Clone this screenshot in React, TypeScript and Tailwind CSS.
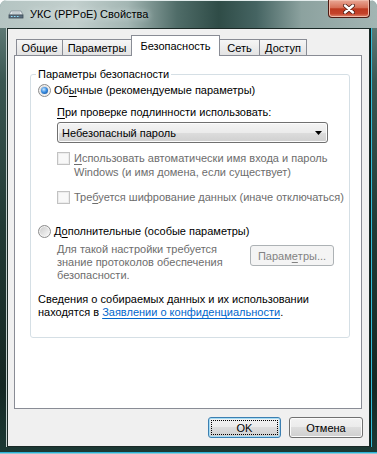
import React from "react";

const Radio = ({ checked }: { checked?: boolean }) => (
  <span className="flex h-[13px] w-[13px] shrink-0 items-center justify-center rounded-full border border-[#8c8c8c] bg-[linear-gradient(135deg,#c9c9c9,#fbfbfb)] shadow-[inset_0_0_0_1px_#f3f3f3]">
    {checked && (
      <span className="h-[7px] w-[7px] rounded-full bg-[radial-gradient(circle_at_40%_35%,#c7e7ff_0%,#3b8ee2_45%,#0c468f_100%)]" />
    )}
  </span>
);

const Check = () => (
  <span className="mt-[1px] h-[13px] w-[13px] shrink-0 border border-[#c2c2c2] bg-[#f8f8f8] shadow-[inset_0_0_0_1px_#ececec]" />
);

const U = ({ children }: { children: React.ReactNode }) => (
  <span className="underline underline-offset-[2px]">{children}</span>
);

const NetIcon = () => (
  <svg width="16" height="12" viewBox="0 0 16 12">
    <path d="M3 3 L13 3 L15 7 L1 7 Z" fill="#e4e9ec" stroke="#7d8b94" strokeWidth="0.8" />
    <rect x="1" y="7" width="14" height="3" fill="#5d7180" stroke="#3c4a55" strokeWidth="0.8" />
    <rect x="3" y="8" width="1.5" height="1" fill="#8fe0ff" />
    <rect x="6" y="8" width="1.5" height="1" fill="#8fe0ff" />
    <rect x="9" y="8" width="1.5" height="1" fill="#8fe0ff" />
    <path d="M4 5 L12 5" stroke="#9aa7b0" strokeWidth="0.8" />
  </svg>
);

export default function App() {
  return (
    <div className="flex h-[454px] w-[377px] flex-col overflow-hidden rounded-t-[7px] bg-[linear-gradient(180deg,#6f8a86_0%,#3a5651_18%,#223a35_50%,#152723_85%,#1c3a35_100%)] font-['Liberation_Sans',Arial,sans-serif] text-[11px] leading-[14px] whitespace-nowrap text-black shadow-[inset_0_-1px_0_#8ec9d6,inset_0_-2px_0_#2bb3d8]">
      {/* title bar */}
      <div className="flex h-[28px] items-start bg-[linear-gradient(90deg,#b4c4c2_0%,#c2cfcd_20%,#a3b6b3_34%,#4f6c68_47%,#2f4c47_58%,#456462_68%,#8ca29f_80%,#a3b5b3_100%)] shadow-[inset_0_1px_0_#e3ecec]">
        <div className="flex items-center gap-[6px] pl-[8px] pt-[7px]">
          <NetIcon />
          <span className="text-[11px] leading-[14px] text-black [text-shadow:0_0_6px_#e8f0f0]">УКС (PPPoE) Свойства</span>
        </div>
        <div className="ml-auto mr-[7px] flex h-[18px] w-[42px] items-center justify-center rounded-b-[4px] border border-t-0 border-[#4e1a12] bg-[linear-gradient(180deg,#e9a896_0%,#d77058_45%,#bd3a20_52%,#c4422a_80%,#e08a70_100%)] shadow-[inset_0_0_0_1px_#f0b9a8]">
          <svg width="12" height="10" viewBox="0 0 12 10">
            <path d="M2 1.5 L10 8.5 M10 1.5 L2 8.5" stroke="#4a1a12" strokeWidth="4" strokeLinecap="round" />
            <path d="M2 1.5 L10 8.5 M10 1.5 L2 8.5" stroke="#ffffff" strokeWidth="2.4" strokeLinecap="round" />
          </svg>
        </div>
      </div>

      {/* client */}
      <div className="mx-[7px] flex h-[419px] flex-col border border-[#1a2926] bg-[#f0f0f0] pt-[6px] shadow-[-1px_0_0_#c4d0ce,1px_0_0_#0f1d1b,2px_0_0_#36bdd9]">
        <div className="ml-[8px] flex h-[20px] items-end">
          <div className="flex h-[16px] w-[47px] items-center justify-center border border-b-0 border-[#898c95] bg-[linear-gradient(#f6f6f6,#e3e3e3)]">Общие</div>
          <div className="-ml-[1px] flex h-[16px] w-[70px] items-center justify-center border border-b-0 border-[#898c95] bg-[linear-gradient(#f6f6f6,#e3e3e3)]">Параметры</div>
          <div className="relative z-10 -mb-[1px] -ml-[1px] flex h-[21px] w-[89px] items-center justify-center border border-b-0 border-[#898c95] bg-white pb-[1px]">Безопасность</div>
          <div className="-ml-[1px] flex h-[16px] w-[41px] items-center justify-center border border-b-0 border-[#898c95] bg-[linear-gradient(#f6f6f6,#e3e3e3)]">Сеть</div>
          <div className="-ml-[1px] flex h-[16px] w-[48px] items-center justify-center border border-b-0 border-[#898c95] bg-[linear-gradient(#f6f6f6,#e3e3e3)]">Доступ</div>
        </div>

        <div className="ml-[6px] h-[354px] w-[348px] border border-[#898c95] bg-white">
          <fieldset className="ml-[15px] mt-[11px] w-[320px] rounded-[3px] border border-[#d5dfe5] pb-[18px]">
            <legend className="ml-[5px] px-[2px] leading-[14px]">Параметры безопасности</legend>
            <div className="flex flex-col pl-[7px]">
              <div className="mt-[2px] flex items-center gap-[3px]">
                <Radio checked />
                <span>Об<U>ы</U>чные (рекомендуемые параметры)</span>
              </div>

              <div className="flex flex-col pl-[19px]">
                <div className="mt-[8px]"><U>П</U>ри проверке подлинности использовать:</div>
                <div className="mt-[3px] flex h-[21px] w-[271px] items-center rounded-[3px] border border-[#707070] bg-[linear-gradient(#f4f4f4_0%,#ebebeb_50%,#dddddd_50%,#cfcfcf_100%)] pl-[4px] shadow-[inset_0_0_0_1px_#fcfcfc]">
                  <span>Небезопасный пароль</span>
                  <svg className="ml-auto mr-[5px]" width="7" height="4" viewBox="0 0 7 4">
                    <path d="M0 0 L7 0 L3.5 4 Z" fill="#000" />
                  </svg>
                </div>

                <div className="mt-[8px] flex items-start gap-[4px] text-[#6d6d6d]">
                  <Check />
                  <span className="leading-[14px]">
                    <U>И</U>спользовать автоматически имя входа и пароль
                    <br />
                    Windows (и имя домена, если существует)
                  </span>
                </div>

                <div className="mt-[11px] flex items-start gap-[4px] text-[#6d6d6d]">
                  <Check />
                  <span>Тре<U>б</U>уется шифрование данных (иначе отключаться)</span>
                </div>
              </div>

              <div className="mt-[20px] flex items-center gap-[3px]">
                <Radio />
                <span>Д<U>о</U>полнительные (особые параметры)</span>
              </div>

              <div className="mt-[5px] flex items-start pl-[19px]">
                <div className="w-[193px] leading-[13px] text-[#6d6d6d]">
                  Для такой настройки требуется
                  <br />
                  знание протоколов обеспечения
                  <br />
                  безопасности.
                </div>
                <div className="mt-[2px] flex h-[21px] w-[84px] items-center justify-center rounded-[3px] border border-[#adb2b5] bg-[#f4f4f4] text-[#838383]">
                  Парам<U>е</U>тры...
                </div>
              </div>

              <div className="mt-[11px] leading-[13px]">
                Сведения о собираемых данных и их использовании
                <br />
                находятся в <span className="text-[#0066cc] underline underline-offset-[2px]">Заявлении о конфиденциальности</span>.
              </div>
            </div>
          </fieldset>
        </div>

        <div className="mt-[8px] flex justify-end gap-[8px] pr-[6px]">
          <div className="flex h-[21px] w-[73px] items-center justify-center rounded-[3px] border border-[#3c7fb1] bg-[linear-gradient(#f2f2f2_0%,#ebebeb_50%,#dddddd_50%,#cfcfcf_100%)] shadow-[inset_0_0_0_1px_#a6dcf5] outline-1 outline-offset-[-4px] outline-black outline-dotted">
            OK
          </div>
          <div className="flex h-[21px] w-[74px] items-center justify-center rounded-[3px] border border-[#707070] bg-[linear-gradient(#f2f2f2_0%,#ebebeb_50%,#dddddd_50%,#cfcfcf_100%)] shadow-[inset_0_0_0_1px_#fbfbfb]">
            Отмена
          </div>
        </div>
      </div>
    </div>
  );
}
